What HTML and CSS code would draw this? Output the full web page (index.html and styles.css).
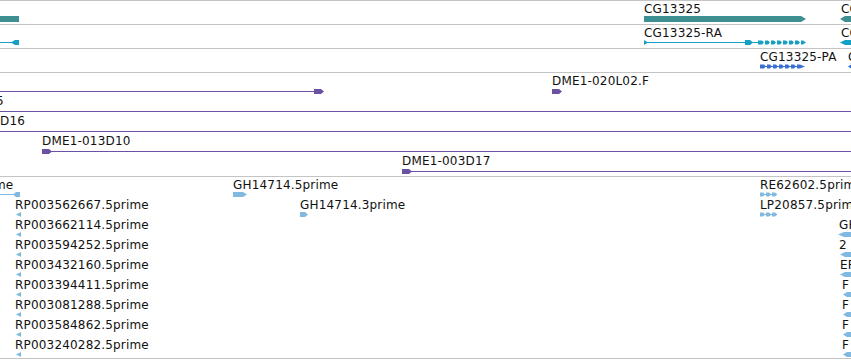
FILE: index.html
```html
<!DOCTYPE html>
<html>
<head>
<meta charset="utf-8">
<link rel="stylesheet" href="styles.css">
</head>
<body>
<div class="view">
  <div class="track t-gene">
    <svg class="canvas" width="851" height="23" viewBox="0 0 851 23">
      <g class="f-teal">
        <rect x="0" y="15" width="19" height="6"/>
        <polygon points="644,15 801,15 806,18 801,21 644,21"/>
        <polygon points="840,18 845,15 851,15 851,21 845,21"/>
      </g>
      <text class="lbl" x="644" y="12">CG13325</text>
      <text class="lbl" x="841" y="12">CG</text>
    </svg>
  </div>
  <div class="track t-gene">
    <svg class="canvas" width="851" height="23" viewBox="0 0 851 23">
      <g class="f-cyan">
        <line x1="0" y1="17.5" x2="12" y2="17.5"/>
        <polygon points="11,17.5 15,15 19,15 19,20 15,20"/>
        <line x1="644" y1="17.5" x2="758" y2="17.5"/>
        <polygon points="644,15 644,20 648,17.5"/>
        <polygon points="745,15 750,15 753,17.5 750,20 745,20"/>
        <polygon points="758,15.5 762,15.5 764,17.5 762,19.5 758,19.5"/>
        <polygon points="765,15.5 768,15.5 770,17.5 768,19.5 765,19.5"/>
        <polygon points="771,15.5 774,15.5 776,17.5 774,19.5 771,19.5"/>
        <polygon points="777,15.5 780,15.5 782,17.5 780,19.5 777,19.5"/>
        <polygon points="783,15.5 786,15.5 788,17.5 786,19.5 783,19.5"/>
        <polygon points="789,15.5 792,15.5 794,17.5 792,19.5 789,19.5"/>
        <polygon points="795,15.5 798,15.5 800,17.5 798,19.5 795,19.5"/>
        <polygon points="801,15.5 803,15.5 806,17.5 803,19.5 801,19.5"/>
        <polygon points="840,17.5 845,15 851,15 851,20 845,20"/>
      </g>
      <text class="lbl" x="644" y="12">CG13325-RA</text>
      <text class="lbl" x="841" y="12">CG</text>
    </svg>
  </div>
  <div class="track t-gene">
    <svg class="canvas" width="851" height="23" viewBox="0 0 851 23">
      <g class="f-blue">
        <line x1="760" y1="17.5" x2="804" y2="17.5"/>
        <polygon points="760,15.5 764,15.5 766,17.5 764,19.5 760,19.5"/>
        <polygon points="767,15.5 770,15.5 772,17.5 770,19.5 767,19.5"/>
        <polygon points="773,15.5 776,15.5 778,17.5 776,19.5 773,19.5"/>
        <polygon points="779,15.5 782,15.5 784,17.5 782,19.5 779,19.5"/>
        <polygon points="785,15.5 788,15.5 790,17.5 788,19.5 785,19.5"/>
        <polygon points="791,15.5 794,15.5 796,17.5 794,19.5 791,19.5"/>
        <polygon points="797,15.5 800,15.5 805,17.5 800,19.5 797,19.5"/>
        <polygon points="848,17.5 851,15.5 851,19.5"/>
      </g>
      <text class="lbl" x="760" y="12">CG13325-PA</text>
      <text class="lbl" x="848" y="12">CG</text>
    </svg>
  </div>
  <div class="track t-bac">
    <svg class="canvas" width="851" height="103" viewBox="0 0 851 103">
      <g class="f-purple">
        <line x1="0" y1="18.5" x2="316" y2="18.5"/>
        <polygon points="314,16 321,16 324,18.5 321,21 314,21"/>
        <polygon points="552,16 559,16 562,18.5 559,21 552,21"/>
        <line x1="0" y1="38.5" x2="851" y2="38.5"/>
        <line x1="0" y1="58.5" x2="851" y2="58.5"/>
        <line x1="50" y1="78.5" x2="851" y2="78.5"/>
        <polygon points="42,76 49,76 52,78.5 49,81 42,81"/>
        <line x1="410" y1="98.5" x2="851" y2="98.5"/>
        <polygon points="402,96 409,96 412,98.5 409,101 402,101"/>
      </g>
      <text class="lbl" x="552" y="12">DME1-020L02.F</text>
      <text class="lbl" x="-4" y="32">5</text>
      <text class="lbl" x="0" y="52">D16</text>
      <text class="lbl" x="42" y="72">DME1-013D10</text>
      <text class="lbl" x="402" y="92">DME1-003D17</text>
    </svg>
  </div>
  <div class="track t-est">
    <svg class="canvas" width="851" height="181" viewBox="0 0 851 181">
      <g class="f-light">
        <line x1="0" y1="17.5" x2="14" y2="17.5"/>
        <polygon points="13,17.5 16,15 20,15 20,20 16,20"/>
        <polygon points="233,15 243,15 247,17.5 243,20 233,20"/>
        <line x1="760" y1="17.5" x2="776" y2="17.5"/>
        <polygon points="760,15.5 763,15.5 765.5,17.5 763,19.5 760,19.5"/>
        <polygon points="766,15.5 769,15.5 771.5,17.5 769,19.5 766,19.5"/>
        <polygon points="772,15.5 775,15.5 777.5,17.5 775,19.5 772,19.5"/>
        <polygon points="16,37.5 21,35 21,40"/>
        <polygon points="300,35 305,35 308,37.5 305,40 300,40"/>
        <line x1="760" y1="37.5" x2="776" y2="37.5"/>
        <polygon points="760,35.5 763,35.5 765.5,37.5 763,39.5 760,39.5"/>
        <polygon points="766,35.5 769,35.5 771.5,37.5 769,39.5 766,39.5"/>
        <polygon points="772,35.5 775,35.5 777.5,37.5 775,39.5 772,39.5"/>
        <polygon points="16,57.5 21,55 21,60"/>
        <polygon points="16,77.5 21,75 21,80"/>
        <polygon points="16,97.5 21,95 21,100"/>
        <polygon points="16,117.5 21,115 21,120"/>
        <polygon points="16,137.5 21,135 21,140"/>
        <polygon points="16,157.5 21,155 21,160"/>
        <polygon points="16,177.5 21,175 21,180"/>
        <polygon points="838,57.5 844,55 851,55 851,60 844,60"/>
        <polygon points="840,77.5 845,75 851,75 851,80 845,80"/>
        <polygon points="840,97.5 845,95 851,95 851,100 845,100"/>
        <polygon points="843,117.5 847,115 851,115 851,120 847,120"/>
        <polygon points="843,137.5 847,135 851,135 851,140 847,140"/>
        <polygon points="843,157.5 847,155 851,155 851,160 847,160"/>
        <polygon points="843,177.5 847,175 851,175 851,180 847,180"/>
      </g>
      <text class="lbl" x="-6" y="12">me</text>
      <text class="lbl" x="233" y="12">GH14714.5prime</text>
      <text class="lbl" x="760" y="12">RE62602.5prime</text>
      <text class="lbl" x="15" y="32">RP003562667.5prime</text>
      <text class="lbl" x="300" y="32">GH14714.3prime</text>
      <text class="lbl" x="760" y="32">LP20857.5prime</text>
      <text class="lbl" x="15" y="52">RP003662114.5prime</text>
      <text class="lbl" x="839" y="52">GH</text>
      <text class="lbl" x="15" y="72">RP003594252.5prime</text>
      <text class="lbl" x="839" y="72">2</text>
      <text class="lbl" x="840" y="92">EP</text>
      <text class="lbl" x="15" y="92">RP003432160.5prime</text>
      <text class="lbl" x="15" y="112">RP003394411.5prime</text>
      <text class="lbl" x="842" y="112">F</text>
      <text class="lbl" x="15" y="132">RP003081288.5prime</text>
      <text class="lbl" x="842" y="132">F</text>
      <text class="lbl" x="15" y="152">RP003584862.5prime</text>
      <text class="lbl" x="842" y="152">F</text>
      <text class="lbl" x="15" y="172">RP003240282.5prime</text>
      <text class="lbl" x="842" y="172">F</text>
    </svg>
  </div>
</div>
</body>
</html>
```
FILE: styles.css
```css
body {
  margin: 0;
  background: #ffffff;
  font-family: "DejaVu Sans", "Liberation Sans", sans-serif;
  font-size: 12px;
}

.view {
  width: 851px;
  height: 360px;
  overflow: hidden;
}

.track {
  position: relative;
  overflow: hidden;
  border-top: 1px solid #c4c4c4;
}

.t-gene { height: 23px; }
.t-bac { height: 103px; }
.t-est {
  height: 181px;
  border-bottom: 1px solid #c4c4c4;
}

.canvas {
  position: absolute;
  left: 0;
  top: 0;
  display: block;
}

.lbl {
  font-family: "DejaVu Sans", "Liberation Sans", sans-serif;
  font-size: 12px;
  letter-spacing: 0.18px;
  fill: #111111;
}

.f-teal { fill: #3d8f91; stroke: #3d8f91; stroke-width: 0; }
.f-cyan { fill: #13a0c2; stroke: #13a0c2; }
.f-blue { fill: #3a6fd3; stroke: #3a6fd3; }
.f-purple { fill: #6a51a3; stroke: #6a51a3; }
.f-light { fill: #82b9e0; stroke: #82b9e0; }

.f-cyan polygon,
.f-blue polygon,
.f-purple polygon,
.f-light polygon { stroke-width: 0; }

.f-cyan line,
.f-blue line,
.f-purple line,
.f-light line { stroke-width: 1; }
```
